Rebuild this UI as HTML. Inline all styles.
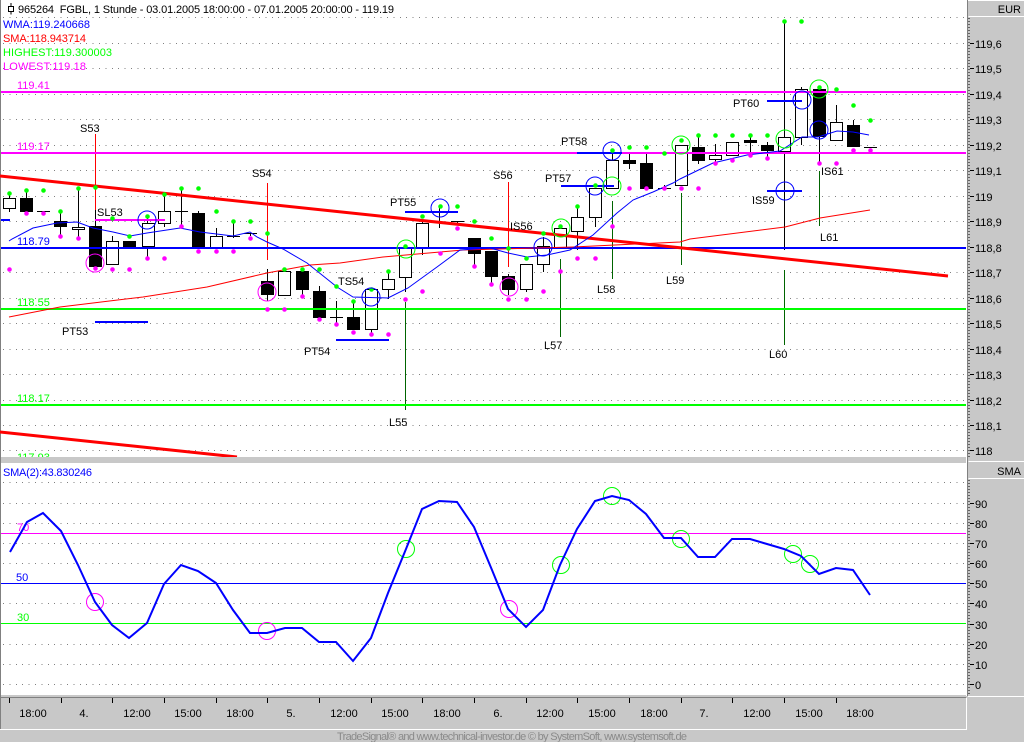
<!DOCTYPE html>
<html><head><meta charset="utf-8"><style>
html,body{margin:0;padding:0;width:1024px;height:742px;overflow:hidden;background:#c8c8c8}
svg{display:block;font-family:"Liberation Sans",sans-serif;font-size:11px}
.c{shape-rendering:crispEdges}
</style></head><body>
<svg width="1024" height="742" viewBox="0 0 1024 742">
<rect width="1024" height="742" fill="#c8c8c8"/>
<!-- panels -->
<rect x="1" y="1" width="965" height="456" fill="#fff"/>
<rect x="1" y="463" width="965" height="232" fill="#fff"/>
<g class="c">
<path d="M0 .5H1024M966.5 0V696M968.5 16.5H1024M968.5 461.5H1024M968.5 478.5H1024M968 696.5H1024M0 729.5H967M966.5 698V730" stroke="#fff" fill="none"/>
<path d="M967.5 0V696M0 697.5H966M.5 0V697M.5 697V729" stroke="#808080" fill="none"/>
<path d="M969 18V458M969 480V696" stroke="#000" stroke-dasharray="1 2" fill="none"/>
<!-- axis ticks -->
<path d="M970 43.5h4M970 68.5h4M970 94.5h4M970 119.5h4M970 145.5h4M970 170.5h4M970 196.5h4M970 221.5h4M970 247.5h4M970 272.5h4M970 298.5h4M970 323.5h4M970 349.5h4M970 374.5h4M970 400.5h4M970 425.5h4M970 450.5h4M970 503.5h4M970 523.5h4M970 543.5h4M970 563.5h4M970 583.5h4M970 603.5h4M970 624.5h4M970 644.5h4M970 664.5h4M970 684.5h4" stroke="#000" fill="none"/>
<path d="M9.5 698v5M61.5 698v5M112.5 698v5M164.5 698v5M216.5 698v5M267.5 698v5M319.5 698v5M371.5 698v5M422.5 698v5M474.5 698v5M526.5 698v5M577.5 698v5M629.5 698v5M681.5 698v5M732.5 698v5M784.5 698v5M836.5 698v5" stroke="#000" fill="none"/>
<!-- dotted grid -->
<path d="M3 17.5H966M3 43.5H966M3 68.5H966M3 94.5H966M3 119.5H966M3 145.5H966M3 170.5H966M3 196.5H966M3 221.5H966M3 247.5H966M3 272.5H966M3 298.5H966M3 323.5H966M3 349.5H966M3 374.5H966M3 400.5H966M3 425.5H966M3 450.5H966M3 482.5H966M3 503.5H966M3 523.5H966M3 543.5H966M3 563.5H966M3 603.5H966M3 644.5H966M3 664.5H966M3 684.5H966" stroke="#808080" stroke-dasharray="1 5.4" fill="none"/>
<!-- wicks -->
<path d="M9.5 195V212M26.5 190V198M43.5 211V213M60.5 211V237M78.5 188V238M95.5 210V268M112.5 236V241M147.5 216V258M164.5 193V227M181.5 190V228M198.5 211V213M216.5 228V236M233.5 221V238M250.5 233V236M267.5 269V301M302.5 290V296M319.5 286V291M336.5 301V326M353.5 303V317M371.5 289V334M388.5 270V299M405.5 277V292M422.5 220V255M439.5 208V228M457.5 221V224M474.5 254V266M491.5 277V284M508.5 274V295M526.5 289V292M543.5 237V272M577.5 206V250M595.5 217V227M612.5 150V160M629.5 154V169M646.5 154V163M664.5 185V188M698.5 135V164M715.5 144V165M750.5 135V153M767.5 142V158M784.5 20V250M801.5 87V145M819.5 87V163M836.5 105V123M853.5 120V125" stroke="#000" fill="none"/>
<!-- doji -->
<path d="M37 211.5H50M72 227.5H85M175 211.5H188M227 236.5H240M244 233.5H257M330 317.5H343M434 222.5H447M451 221.5H464M658 188.5H671M864 147.5H877" stroke="#000" fill="none"/>
<!-- white bodies -->
<path d="M3.5 198.5h12v10h-12zM106.5 241.5h12v23h-12zM72.5 227.5h12v2h-12zM142.5 223.5h12v23h-12zM158.5 211.5h12v12h-12zM210.5 236.5h12v11h-12zM278.5 271.5h12v24h-12zM365.5 289.5h12v40h-12zM382.5 279.5h12v10h-12zM399.5 248.5h12v29h-12zM416.5 223.5h12v24h-12zM520.5 264.5h12v25h-12zM537.5 246.5h12v18h-12zM554.5 228.5h12v19h-12zM571.5 217.5h12v14h-12zM589.5 188.5h12v29h-12zM606.5 160.5h12v28h-12zM675.5 145.5h12v40h-12zM709.5 155.5h12v4h-12zM726.5 142.5h12v13h-12zM778.5 137.5h12v14h-12zM795.5 89.5h12v48h-12zM830.5 122.5h12v18h-12z" fill="#fff" stroke="#000"/>
<!-- black bodies -->
<path d="M20 198h13v14h-13zM54 221h13v6h-13zM89 226h13v41h-13zM123 241h13v7h-13zM192 213h13v34h-13zM744 140h13v3h-13zM261 281h13v14h-13zM296 271h13v19h-13zM313 291h13v27h-13zM347 317h13v13h-13zM468 238h13v16h-13zM485 251h13v26h-13zM502 276h13v14h-13zM623 160h13v4h-13zM640 163h13v26h-13zM692 147h13v14h-13zM761 145h13v6h-13zM813 89h13v48h-13zM847 125h13v22h-13z" fill="#000"/>
<!-- signal lines -->
<path d="M95.5 134V210M267.5 183V260M508.5 182V267" stroke="#f00" fill="none"/>
<path d="M405.5 302V410M560.5 259V337M612.5 201V279M681.5 193V265M784.5 270V345M819.5 171V226" stroke="#006400" fill="none"/>
<!-- horizontal levels -->
<rect x="1" y="91" width="965" height="2" fill="#f0f"/>
<rect x="1" y="152" width="965" height="2" fill="#f0f"/>
<rect x="1" y="247" width="965" height="2" fill="#00f"/>
<rect x="1" y="308" width="965" height="2" fill="#0f0"/>
<rect x="1" y="404" width="965" height="2" fill="#0f0"/>
<!-- target segments -->
<rect x="1" y="219" width="9" height="2" fill="#00f"/>
<rect x="95" y="219" width="70" height="2" fill="#f0f"/>
<rect x="95" y="321" width="53" height="2" fill="#00f"/>
<rect x="336" y="339" width="53" height="2" fill="#00f"/>
<rect x="405" y="211" width="53" height="2" fill="#00f"/>
<rect x="561" y="185" width="53" height="2" fill="#00f"/>
<rect x="577" y="152" width="45" height="2" fill="#00f"/>
<rect x="767" y="100" width="35" height="2" fill="#00f"/>
<rect x="767" y="190" width="35" height="2" fill="#00f"/>
<!-- lower panel levels -->
<rect x="1" y="533" width="965" height="1" fill="#f0f"/>
<rect x="1" y="583" width="965" height="1" fill="#00f"/>
<rect x="1" y="623" width="965" height="1" fill="#0f0"/>
</g>
<!-- trend lines -->
<path d="M0 176L948 276" stroke="#f00" stroke-width="3" fill="none"/>
<path d="M0 432L237 457" stroke="#f00" stroke-width="3" fill="none"/>
<!-- SMA thin -->
<path d="M9 317L60 307L143 297L207 287L267 273L310 265L340 263L383 257L463 250L573 247L680 242L690 239L785 227L820 218L870 210" stroke="#f00" fill="none"/>
<!-- WMA thin -->
<path d="M9 241L12 239L33 228L57 223L77 222L93 228L113 232L130 236L147 233L180 228L200 232L233 236L250 232L257 237L267 242L283 249L307 263L337 287L353 297L388 298L408 288L437 267L460 250L490 248L508 253L527 257L547 255L570 250L593 235L617 213L633 200L653 192L673 183L680 179L713 163L747 155L780 151L802 137L818 137L837 131L853 132L869 135" stroke="#00f" fill="none"/>
<!-- dots -->
<g transform="translate(.5 .5)">
<path d="M9 193h0M26 190h0M43 190h0M60 211h0M78 188h0M95 187h0M112 218h0M129 236h0M147 216h0M164 194h0M181 188h0M198 188h0M216 211h0M233 221h0M250 221h0M267 233h0M284 269h0M302 269h0M319 269h0M336 286h0M353 301h0M371 289h0M388 271h0M405 246h0M422 216h0M440 206h0M457 206h0M474 221h0M491 238h0M508 248h0M526 258h0M543 233h0M560 226h0M577 206h0M595 185h0M612 150h0M629 147h0M646 147h0M664 153h0M681 140h0M698 135h0M715 135h0M732 135h0M750 135h0M767 135h0M784 21h0M801 21h0M819 87h0M836 89h0M853 105h0M870 120h0" stroke="#0f0" stroke-width="4.6" stroke-linecap="round" fill="none"/>
<path d="M9 269h0M26 213h0M43 213h0M60 236h0M78 238h0M95 268h0M112 269h0M129 269h0M147 258h0M164 258h0M181 226h0M198 251h0M216 251h0M233 251h0M250 238h0M267 309h0M284 309h0M302 296h0M319 319h0M336 324h0M353 332h0M371 334h0M388 334h0M405 299h0M422 291h0M440 253h0M457 228h0M474 266h0M491 284h0M508 299h0M526 299h0M543 291h0M560 271h0M577 258h0M595 258h0M612 226h0M629 188h0M646 188h0M664 188h0M681 188h0M698 188h0M715 163h0M732 160h0M750 155h0M767 158h0M819 163h0M836 163h0M853 150h0M870 150h0" stroke="#f0f" stroke-width="4.6" stroke-linecap="round" fill="none"/>
</g>
<!-- circles -->
<g fill="none" stroke="#00f">
<circle cx="147" cy="220" r="9"/><circle cx="371" cy="297" r="9"/><circle cx="440" cy="208" r="9"/><circle cx="543" cy="247" r="9"/><circle cx="595" cy="186" r="9"/><circle cx="612" cy="151" r="9"/><circle cx="785" cy="191" r="9"/><circle cx="802" cy="100" r="9"/><circle cx="819" cy="130" r="9"/>
</g>
<g fill="none" stroke="#0f0">
<circle cx="406" cy="249" r="9"/><circle cx="561" cy="228" r="9"/><circle cx="612" cy="186" r="9"/><circle cx="681" cy="145" r="9"/><circle cx="785" cy="139" r="9"/><circle cx="819" cy="89" r="9"/>
<circle cx="406" cy="549" r="8.5"/><circle cx="561" cy="565" r="8.5"/><circle cx="612" cy="496" r="8.5"/><circle cx="681" cy="539" r="8.5"/><circle cx="793" cy="554" r="8.5"/><circle cx="810" cy="564" r="8.5"/>
</g>
<g fill="none" stroke="#f0f">
<circle cx="95" cy="263" r="9"/><circle cx="267" cy="292" r="9"/><circle cx="509" cy="287" r="9"/>
<circle cx="95" cy="602" r="8.5"/><circle cx="267" cy="631" r="8.5"/><circle cx="509" cy="609" r="8.5"/>
</g>
<text x="17" y="531" fill="#f0f">70</text>
<text x="16" y="581" fill="#00f">50</text>
<text x="17" y="621" fill="#0f0">30</text>
<!-- oscillator -->
<path d="M10 552L27 522L43 513L61 531L78 565L95 602L112 625L129 638L147 623L164 584L181 565L198 571L216 583L233 610L250 633L267 633L285 628L302 628L319 642L336 642L353 661L371 638L388 593L406 549L422 509L439 501L457 502L474 527L492 570L508 609L526 627L543 610L560 565L577 529L595 501L612 496L629 500L646 514L664 538L681 538L698 557L715 557L732 539L750 539L767 544L784 549L801 556L819 574L836 568L853 570L870 595" stroke="#00f" stroke-width="2" fill="none"/>
<!-- title icon -->
<path d="M8.5 6.5h5v5h-5zM11 3v3.5M11 11.5v3" stroke="#000" fill="none" class="c"/>
<!-- texts -->
<text x="18" y="13" fill="#000" textLength="376" lengthAdjust="spacing">965264&#160;&#160;FGBL, 1 Stunde - 03.01.2005 18:00:00 - 07.01.2005 20:00:00 - 119.19</text>
<g>
<text x="3" y="28" fill="#00f" textLength="87">WMA:119.240668</text>
<text x="3" y="42" fill="#f00" textLength="83">SMA:118.943714</text>
<text x="3" y="56" fill="#0f0" textLength="109">HIGHEST:119.300003</text>
<text x="3" y="70" fill="#f0f" textLength="83">LOWEST:119.18</text>
<text x="17" y="89" fill="#f0f">119.41</text>
<text x="17" y="150" fill="#f0f">119.17</text>
<text x="17" y="245" fill="#00f">118.79</text>
<text x="17" y="306" fill="#0f0">118.55</text>
<text x="17" y="402" fill="#0f0">118.17</text>
<text x="17" y="461" fill="#0f0">117.93</text>
</g>
<rect x="0" y="457" width="966" height="6" fill="#c8c8c8"/>
<rect x="0" y="457" width="1" height="6" fill="#808080"/>
<g fill="#000">
<text x="80" y="132">S53</text>
<text x="252" y="177">S54</text>
<text x="493" y="179">S56</text>
<text x="97" y="216">SL53</text>
<text x="62" y="335">PT53</text>
<text x="304" y="355">PT54</text>
<text x="338" y="285">TS54</text>
<text x="390" y="206">PT55</text>
<text x="510" y="230">IS56</text>
<text x="545" y="182">PT57</text>
<text x="561" y="145">PT58</text>
<text x="733" y="107">PT60</text>
<text x="752" y="204">IS59</text>
<text x="821" y="175">IS61</text>
<text x="820" y="241">L61</text>
<text x="389" y="426">L55</text>
<text x="544" y="349">L57</text>
<text x="597" y="293">L58</text>
<text x="666" y="284">L59</text>
<text x="769" y="358">L60</text>
<text x="1021" y="13" text-anchor="end">EUR</text>
<text x="1021" y="475" text-anchor="end">SMA</text>
</g>
<g fill="#000">
<text x="975" y="48">119,6</text><text x="975" y="73">119,5</text><text x="975" y="99">119,4</text><text x="975" y="124">119,3</text><text x="975" y="150">119,2</text><text x="975" y="175">119,1</text><text x="975" y="201">119</text><text x="975" y="226">118,9</text><text x="975" y="252">118,8</text><text x="975" y="277">118,7</text><text x="975" y="303">118,6</text><text x="975" y="328">118,5</text><text x="975" y="354">118,4</text><text x="975" y="379">118,3</text><text x="975" y="405">118,2</text><text x="975" y="430">118,1</text><text x="975" y="455">118</text>
<text x="975" y="508">90</text><text x="975" y="528">80</text><text x="975" y="548">70</text><text x="975" y="568">60</text><text x="975" y="588">50</text><text x="975" y="608">40</text><text x="975" y="629">30</text><text x="975" y="649">20</text><text x="975" y="669">10</text><text x="975" y="689">0</text>
</g>
<text x="3" y="476" fill="#00f" textLength="89">SMA(2):43.830246</text>
<g fill="#000" text-anchor="middle">
<text x="33" y="717">18:00</text><text x="84" y="717">4.</text><text x="137" y="717">12:00</text><text x="188" y="717">15:00</text><text x="240" y="717">18:00</text><text x="291" y="717">5.</text><text x="344" y="717">12:00</text><text x="395" y="717">15:00</text><text x="447" y="717">18:00</text><text x="498" y="717">6.</text><text x="550" y="717">12:00</text><text x="602" y="717">15:00</text><text x="654" y="717">18:00</text><text x="704" y="717">7.</text><text x="757" y="717">12:00</text><text x="809" y="717">15:00</text><text x="860" y="717">18:00</text>
</g>
<text x="512" y="740" fill="#8a8a8a" font-size="11" text-anchor="middle" textLength="350">TradeSignal® and www.technical-investor.de © by  SystemSoft, www.systemsoft.de</text>
</svg>
</body></html>
